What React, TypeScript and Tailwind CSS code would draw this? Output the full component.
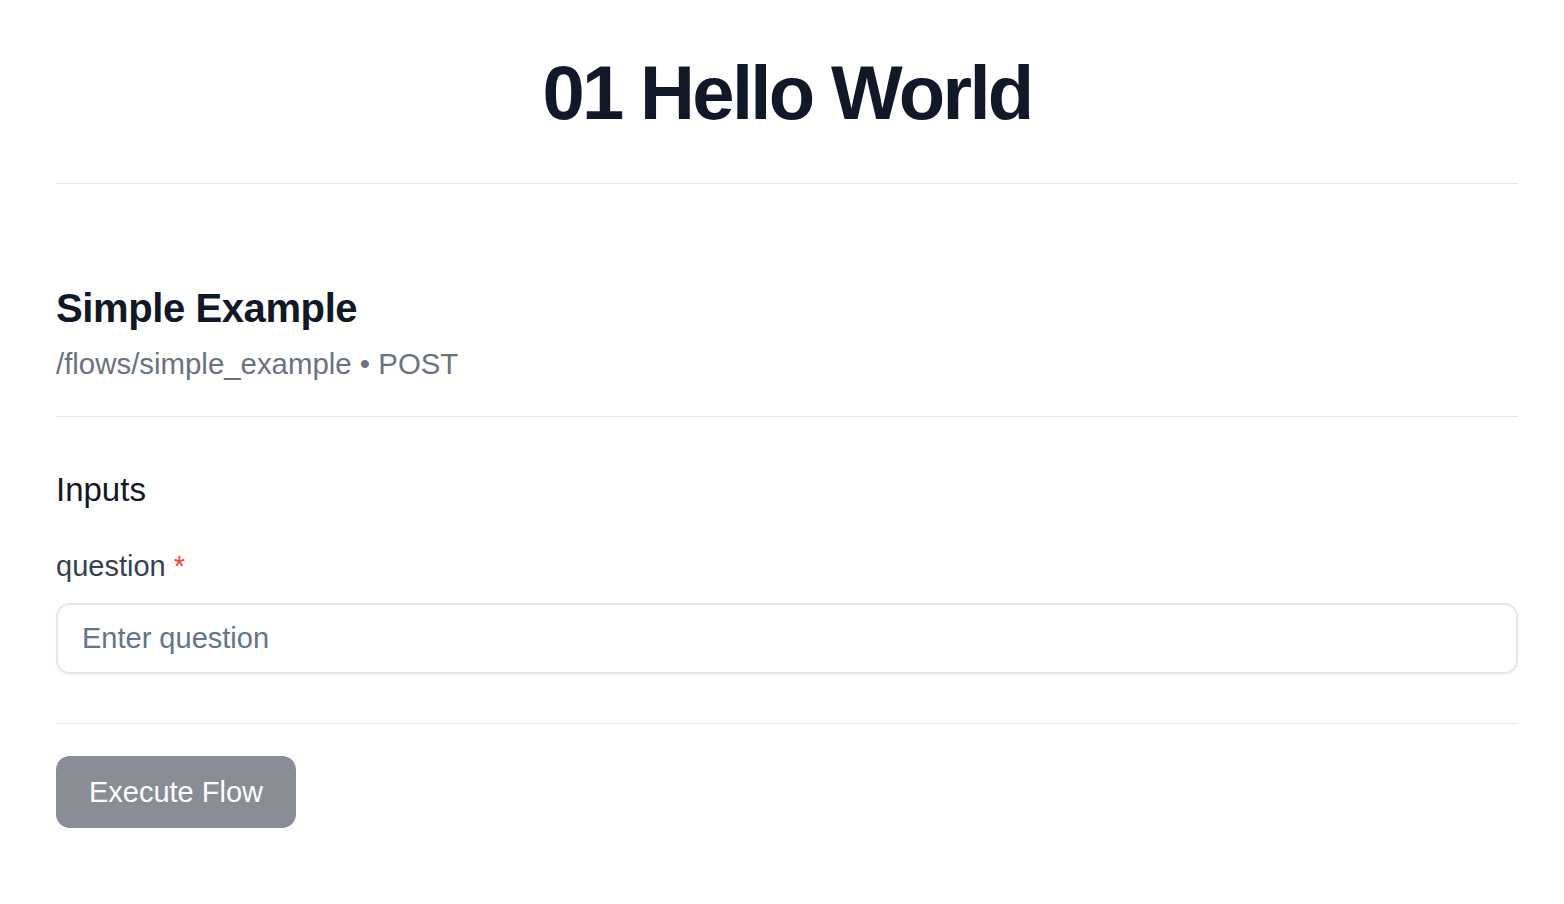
import { useState } from "react";

export default function App() {
  const [question, setQuestion] = useState("");

  return (
    <div className="min-h-screen bg-white pl-[56px] pr-[46px] font-['Liberation_Sans',Arial,sans-serif]">
      <header className="border-b border-[#e5e7eb] pt-[55px] pb-[52px] text-center">
        <h1 className="text-[76px] leading-none font-bold tracking-[-0.035em] text-[#111827]">01 Hello World</h1>
      </header>

      <main>
        <section className="border-b border-[#e5e7eb] pt-[104px] pb-[38px]">
          <h2 className="text-[40px] leading-none font-bold tracking-[-0.01em] text-[#111827]">Simple Example</h2>
          <p className="mt-[21px] text-[29.4px] leading-none text-[#6b7280]">/flows/simple_example • POST</p>
        </section>

        <section className="border-b border-[#e5e7eb] pt-[56px] pb-[49px]">
          <h3 className="text-[33px] leading-none text-[#111827]">Inputs</h3>
          <label className="mt-[46px] block text-[29px] leading-none text-[#374151]">
            question <span className="text-[#ef4444]">*</span>
          </label>
          <input
            value={question}
            onChange={e => setQuestion(e.target.value)}
            placeholder="Enter question"
            className="mt-[22px] block h-[71px] w-full rounded-[14px] border-2 border-[#e2e8f0] px-[24px] text-[29px] text-[#111827] shadow-xs outline-none placeholder:text-[#64748b]"
          />
        </section>

        <div className="pt-[32px]">
          <button
            disabled={!question}
            className="h-[72px] w-[240px] rounded-[14px] bg-[#898d96] text-[29px] text-white"
          >
            Execute Flow
          </button>
        </div>
      </main>
    </div>
  );
}
